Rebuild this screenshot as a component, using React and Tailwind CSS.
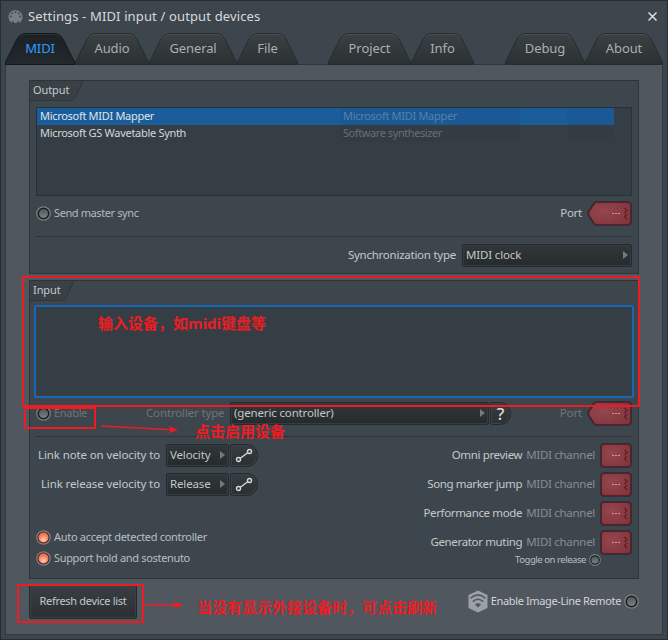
import React from "react";

const TABS = [
  { label: "MIDI", w: 70, gap: 0, active: true },
  { label: "Audio", w: 74, gap: 0 },
  { label: "General", w: 88, gap: 0 },
  { label: "File", w: 61, gap: 0 },
  { label: "Project", w: 83, gap: 30 },
  { label: "Info", w: 63, gap: 0 },
  { label: "Debug", w: 80, gap: 31 },
  { label: "About", w: 78, gap: 0 },
];

function Tab({ label, w, gap, active }) {
  const d = `M0.5 31.5 V29 L12 6 Q15 0.5 20 0.5 H${w - 20} Q${w - 15} 0.5 ${w - 12} 6 L${w - 0.5} 29 V31.5 Z`;
  const inner = `M14 5 Q16 1.5 20 1.5 H${w - 20} Q${w - 16} 1.5 ${w - 14} 5`;
  return (
    <div className="relative h-8 shrink-0" style={{ width: w, marginLeft: gap }}>
      <svg width={w} height="32" className="absolute inset-0">
        <defs>
          <linearGradient id={"tab" + label} x1="0" y1="0" x2="0" y2="1">
            <stop offset="0" stopColor={active ? "#1b2024" : "#3b4043"} />
            <stop offset="1" stopColor={active ? "#23292d" : "#2b3033"} />
          </linearGradient>
        </defs>
        <path d={d} fill={`url(#tab${label})`} stroke={active ? "#12171b" : "#252d33"} />
        <path d={inner} fill="none" stroke={active ? "#2b3135" : "#4a4f52"} />
      </svg>
      <div className={"relative flex h-[31px] items-center justify-center text-[13px] tracking-[-0.1px] " + (active ? "text-[#2f9bff]" : "text-[#a9afb2]")}>
        {label}
      </div>
    </div>
  );
}

function Radio({ on, small }) {
  return (
    <svg width={small ? 12 : 15} height={small ? 12 : 15} viewBox="0 0 15 15" className="shrink-0">
      <defs>
        <linearGradient id="offFill" x1="0" y1="0" x2="0" y2="1">
          <stop offset="0" stopColor="#50575a" />
          <stop offset="1" stopColor="#7b8183" />
        </linearGradient>
        <radialGradient id="onFill" cy="0.7">
          <stop offset="0" stopColor="#ffd0b0" />
          <stop offset="1" stopColor="#f07858" />
        </radialGradient>
      </defs>
      <circle cx="7.5" cy="7.5" r="6.7" fill={on ? "#5a1a16" : "#191e21"} stroke="#7a8083" strokeWidth="1.3" />
      <circle cx="7.5" cy="7.5" r={on ? 5 : 4.5} fill={on ? "url(#onFill)" : "url(#offFill)"} />
    </svg>
  );
}

function Port({ arrow }) {
  const w = arrow ? 45 : 32;
  const outer = arrow
    ? "M9.5 0.5 H41 Q44.5 0.5 44.5 4 V21 Q44.5 24.5 41 24.5 H9.5 Q7.5 24.5 6.5 23 L1 14.5 Q0 12.5 1 10.5 L6.5 2 Q7.5 0.5 9.5 0.5 Z"
    : "M4 0.5 H28 Q31.5 0.5 31.5 4 V21 Q31.5 24.5 28 24.5 H4 Q0.5 24.5 0.5 21 V4 Q0.5 0.5 4 0.5 Z";
  const face = arrow
    ? "M10 1.5 H41 Q43.5 1.5 43.5 4 V21 Q43.5 23.5 41 23.5 H10 Q8.5 23.5 7.5 22.3 L2 14 Q1.2 12.5 2 11 L7.5 2.7 Q8.5 1.5 10 1.5 Z"
    : "M4 1.5 H28 Q30.5 1.5 30.5 4 V21 Q30.5 23.5 28 23.5 H4 Q1.5 23.5 1.5 21 V4 Q1.5 1.5 4 1.5 Z";
  return (
    <svg width={w} height="25" className="shrink-0">
      <defs>
        <radialGradient id="portFill" cx="0.35" cy="0.4" r="0.8">
          <stop offset="0" stopColor="#95464f" />
          <stop offset="1" stopColor="#7f343c" />
        </radialGradient>
      </defs>
      <path d={outer} fill="#252b31" stroke="#2b3238" />
      <path d={face} fill="url(#portFill)" stroke="#641b27" />
      <path d={`M${w - 20} 12.5 h8`} stroke="#d99a8c" strokeDasharray="2 1" />
      <path d={`M${w - 7.5} 7 l2.5 2.5 l-2.5 2.5 M${w - 5} 13 l-2.5 2.5 l2.5 2.5`} fill="none" stroke="#641c26" strokeWidth="1.3" />
    </svg>
  );
}

function Select({ children, className }) {
  return (
    <div className={"flex h-[23px] items-center justify-between rounded-[2px] border border-[#242a2f] bg-linear-to-b from-[#32373a] to-[#252a2d] pr-[3px] pb-px pl-[3px] text-[11.5px] tracking-[-0.15px] text-[#c3c8c6] shadow-[inset_0_0_0_1px_#363c40] " + className}>
      <span className="whitespace-nowrap">{children}</span>
      <svg width="5" height="8"><path d="M0 0 L5 4 L0 8 Z" fill="#747b7e" /></svg>
    </div>
  );
}

function SideButton({ children, className }) {
  return (
    <div className={"flex h-[23px] items-center justify-center rounded-l-[2px] rounded-r-[11px] border border-[#242a2f] bg-linear-to-b from-[#383d40] to-[#2a2f32] text-[#d8dcda] shadow-[inset_0_0_0_1px_#3c4246] " + className}>
      {children}
    </div>
  );
}

function GroupLabel({ children, w }) {
  return (
    <div className="relative h-5 shrink-0">
      <svg width={w} height="21" className="absolute top-0 left-0">
        <path d={`M0 0 H${w} L${w - 8} 17 Q${w - 10} 19.5 ${w - 13} 19.5 H0 Z`} fill="#394147" />
        <path d={`M${w} 0 L${w - 8} 17 Q${w - 10} 19.5 ${w - 13} 19.5 H0`} fill="none" stroke="#2e363c" />
      </svg>
      <div className="relative pl-[3px] text-[11px] leading-[17px] tracking-[-0.1px] text-[#c5cacb]">{children}</div>
    </div>
  );
}

function LinkRow({ label, value }) {
  return (
    <div className="flex h-[29px] items-center">
      <div className="w-[124px] pb-[2px] text-right text-[11.5px] tracking-[-0.12px] whitespace-nowrap">{label}</div>
      <Select className="ml-[6px] w-[63px]">{value}</Select>
      <SideButton className="ml-px w-7">
        <svg width="18" height="15" fill="none" stroke="#d8dcda" strokeWidth="1.4">
          <circle cx="3.5" cy="11.5" r="2" />
          <circle cx="14.5" cy="3.5" r="2" />
          <path d="M5.3 10.2 L12.7 4.8" />
        </svg>
      </SideButton>
    </div>
  );
}

function ChannelRow({ label }) {
  return (
    <div className="flex h-[29px] items-center justify-end text-[11.5px] tracking-[-0.35px] whitespace-nowrap">
      <span className="pb-[2px]">{label}</span>
      <span className="mr-[5px] ml-1 pb-[2px] tracking-[-0.3px] text-[#858d91]">MIDI channel</span>
      <Port />
    </div>
  );
}

function OutputGroup() {
  return (
    <section className="flex h-[194px] flex-col border border-[#2d353b] bg-[#3e464d]">
      <GroupLabel w={53}>Output</GroupLabel>
      <div className="mx-[6px] mt-[6px] h-[89px] shrink-0 border border-[#293138] bg-[#363e45] text-[11px] leading-[15px] tracking-[-0.3px]">
        <div className="flex h-[17px] w-[577px] bg-[#1b5c9b]">
          <div className="w-[303px] pl-[3px] text-[#dfe6ea]">Microsoft MIDI Mapper</div>
          <div className="w-[180px] bg-[#1a5995] pl-[3px] text-[#5681ab]">Microsoft MIDI Mapper</div>
          <div className="w-[47px]" />
          <div className="w-[47px] bg-[#1a5995]" />
        </div>
        <div className="flex h-[17px] w-[577px]">
          <div className="w-[303px] pl-[3px] text-[#d3d8d9]">Microsoft GS Wavetable Synth</div>
          <div className="w-[180px] bg-[#343b41] pl-[3px] tracking-[-0.42px] text-[#686f73]">Software synthesizer</div>
          <div className="w-[47px]" />
          <div className="w-[47px] bg-[#343b41]" />
        </div>
      </div>
      <div className="mx-[6px] mt-1 flex h-[27px] shrink-0 items-center">
        <Radio />
        <span className="ml-[3px] text-[11px] tracking-[-0.4px] text-[#b3b9bc]">Send master sync</span>
        <span className="mr-[5px] ml-auto pb-[2px] text-[11.5px] tracking-[-0.25px]">Port</span>
        <Port arrow />
      </div>
      <div className="mx-[6px] mt-[9px] h-px shrink-0 bg-[#2c343a]" />
      <div className="mx-[6px] mt-[7px] flex shrink-0 items-center justify-end text-[11.5px] tracking-[-0.25px]">
        <span className="mr-[6px] pb-[2px]">Synchronization type</span>
        <Select className="w-[170px]">MIDI clock</Select>
      </div>
    </section>
  );
}

function InputGroup() {
  return (
    <section className="mt-[6px] flex h-[299px] flex-col border border-[#2d353b] bg-[#3e464d]">
      <GroupLabel w={44}>Input</GroupLabel>
      <div className="mx-1 mt-1 h-[93px] shrink-0 rounded-[3px] border-2 border-[#1667b5] bg-[#363e45]" />
      <div className="mx-[6px] mt-[3px] flex h-[25px] shrink-0 items-center text-[11.5px] tracking-[-0.15px] text-[#6d7579]">
        <Radio />
        <span className="ml-[3px] w-[86px] text-[11px] tracking-[-0.3px]">Enable</span>
        <span className="ml-[6px] w-[78px] pb-px text-right whitespace-nowrap">Controller type</span>
        <Select className="ml-[6px] w-[259px]">(generic controller)</Select>
        <SideButton className="ml-px w-[21px] text-[17px] font-medium">?</SideButton>
        <span className="mr-[5px] ml-auto pb-px">Port</span>
        <Port arrow />
      </div>
      <div className="mx-[6px] mt-[10px] h-px shrink-0 bg-[#2c343a]" />
      <div className="mx-[6px] mt-1 flex justify-between">
        <div className="flex flex-col">
          <LinkRow label="Link note on velocity to" value="Velocity" />
          <LinkRow label="Link release velocity to" value="Release" />
          <div className="mt-[28px] flex h-[21px] items-center gap-[3px] text-[11px] tracking-[-0.3px] text-[#b9bfc2]"><Radio on />Auto accept detected controller</div>
          <div className="flex h-[21px] items-center gap-[3px] text-[11px] tracking-[-0.33px] text-[#b9bfc2]"><Radio on />Support hold and sostenuto</div>
        </div>
        <div className="flex flex-col">
          <ChannelRow label="Omni preview" />
          <ChannelRow label="Song marker jump" />
          <ChannelRow label="Performance mode" />
          <ChannelRow label="Generator muting" />
          <div className="mr-[31px] flex h-[6px] items-center justify-end gap-[3px] text-[9.5px] tracking-[-0.45px] text-[#b9bfc2]">Toggle on release<Radio small /></div>
        </div>
      </div>
    </section>
  );
}

function Annotations() {
  return (
    <div className="absolute -inset-px text-[15px] leading-5 font-bold whitespace-nowrap text-[#ed1c24]">
      <svg width="668" height="640" className="absolute inset-0" fill="none" stroke="#ed1c24" strokeWidth="2">
        <rect x="23" y="277" width="616" height="129" />
        <rect x="25" y="408" width="70" height="20" />
        <rect x="18" y="585" width="125" height="37" />
        <path d="M101 426 L172 429.7 M145 605 H178" strokeWidth="1.6" />
        <path d="M178 430 L169 426 L171 429.7 L168.5 433.5 Z M183 605 L173.5 601 L176 605 L173.5 609 Z" fill="#ed1c24" stroke="none" />
      </svg>
      <div className="absolute top-[313px] left-[98px]">输入设备，如midi键盘等</div>
      <div className="absolute top-[421px] left-[195px]">点击启用设备</div>
      <div className="absolute top-[597px] left-[197px]">当没有显示外接设备时，可点击刷新</div>
    </div>
  );
}

export default function App() {
  return (
    <div className="relative flex h-[640px] w-[668px] flex-col overflow-hidden border border-[#262e34] bg-[#3e464d] font-['Noto_Sans','Noto_Sans_CJK_SC',sans-serif] text-[#c3c9cb]">
      <header className="flex h-8 shrink-0 items-center pr-[10px] pl-[7px]">
        <svg width="15" height="15" className="-mt-px">
          <path d="M4 14 A7 7 0 1 1 11 14 V12.5 H9 V14 H6 V12.5 H4 Z" fill="#777e82" />
          <g fill="#3e464d">
            <circle cx="7.5" cy="3" r="0.9" /><circle cx="4.2" cy="4.3" r="0.9" /><circle cx="10.8" cy="4.3" r="0.9" />
            <circle cx="2.8" cy="7.5" r="0.9" /><circle cx="12.2" cy="7.5" r="0.9" />
          </g>
        </svg>
        <h1 className="ml-[5px] text-[13px] tracking-[0.14px] text-[#d6dadb]">Settings - MIDI input / output devices</h1>
        <svg width="9" height="9" className="-mt-px ml-auto" stroke="#e2e6e7" strokeWidth="1.4"><path d="M0.5 0.5 L8.5 8.5 M8.5 0.5 L0.5 8.5" /></svg>
      </header>
      <nav className="flex h-[31px] shrink-0 pl-1">
        {TABS.map((t) => <Tab key={t.label} {...t} />)}
      </nav>
      <main className="mr-1 ml-1 flex h-[571px] shrink-0 flex-col border border-[#30383e] bg-[#50575e] pt-[15px] pr-[23px] pl-[23px]">
        <OutputGroup />
        <InputGroup />
        <footer className="mt-[6px] flex h-[34px] items-start justify-between">
          <button className="h-[34px] w-[108px] rounded-[2px] border border-[#23292e] bg-linear-to-b from-[#383e42] to-[#2a2f33] pb-[2px] text-[11px] tracking-[-0.3px] text-[#c2c8ca] shadow-[inset_0_0_0_1px_#394145]">Refresh device list</button>
          <div className="mt-[5px] flex h-[23px] items-center text-[11px] tracking-[-0.37px] text-[#d0d5d6]">
            <svg width="20" height="23" className="mr-[3px]">
              <path d="M10 0.5 L19.5 5 V18 L10 22.5 L0.5 18 V5 Z" fill="#9ba1a4" />
              <g fill="none" stroke="#50575e" strokeWidth="1.5">
                <path d="M2.5 8.3 Q10 1.5 17.5 8.3" />
                <path d="M4.8 11.6 Q10 6.8 15.2 11.6" />
              </g>
              <path d="M7 14.5 Q10 11.8 13 14.5 L10 17.5 Z" fill="#50575e" />
            </svg>
            <span className="mr-[3px]">Enable Image-Line Remote</span>
            <Radio />
          </div>
        </footer>
      </main>
      <Annotations />
    </div>
  );
}
